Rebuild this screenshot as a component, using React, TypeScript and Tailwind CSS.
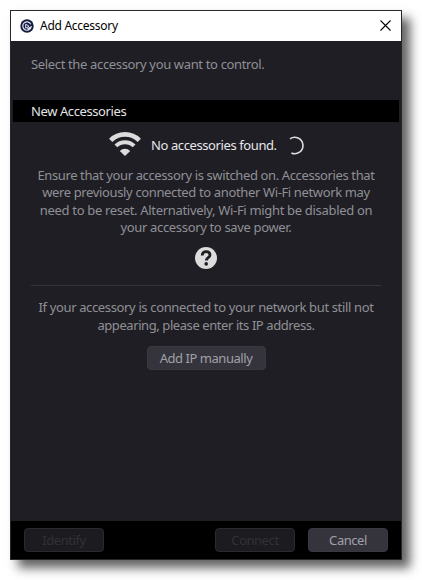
import React from 'react';
import { clsx } from 'clsx';

const hintLines = [
  { text: 'Ensure that your accessory is switched on. Accessories that', className: 'tracking-[-0.38px]' },
  { text: 'were previously connected to another Wi-Fi network may', className: 'tracking-[-0.36px]' },
  { text: 'need to be reset. Alternatively, Wi-Fi might be disabled on', className: 'tracking-[-0.32px]' },
  { text: 'your accessory to save power.', className: 'tracking-[-0.34px]' },
];

const manualLines = [
  { text: 'If your accessory is connected to your network but still not', className: 'tracking-[-0.36px]' },
  { text: 'appearing, please enter its IP address.', className: 'tracking-[-0.42px]' },
];

const AppLogo = () => (
  <svg className="h-[14px] w-[14px]" viewBox="0 0 14 14" fill="none">
    <circle cx="7" cy="7" r="6.7" fill="#14193f" />
    <path d="M10.8 5.2A4.2 4.2 0 1 0 11.1 8L7.4 9.9" stroke="#dfe3ec" strokeWidth="1.2" />
    <path d="M8.9 7.1L5.7 5.2v4l3.4-1.9" stroke="#dfe3ec" strokeWidth="1" />
  </svg>
);

const WifiIcon = () => (
  <svg className="h-6 w-8" viewBox="0 0 32 24" fill="none" stroke="#dcdcdc">
    <path d="M1.7 8.3a20.2 20.2 0 0 1 28.6 0" strokeWidth="4.6" />
    <path d="M6.9 13.9a12.9 12.9 0 0 1 18.2 0" strokeWidth="4" />
    <path d="M10.8 19a7.4 7.4 0 0 1 10.4 0L16 24z" fill="#dcdcdc" stroke="none" />
  </svg>
);

const Spinner = () => (
  <svg className="h-[19px] w-[18px]" viewBox="0 0 18 19" fill="none">
    <path d="M3 2.8A8.2 8.2 0 1 1 4.4 17" stroke="#dcdcdc" strokeWidth="1.6" />
  </svg>
);

const HelpIcon = () => (
  <svg className="h-[22px] w-[22px]" viewBox="0 0 22 22" fill="none">
    <circle cx="11" cy="11" r="11" fill="#dcdcdc" />
    <path d="M7.2 8.4C7.2 6 8.9 4.7 11.1 4.7c2.3 0 3.9 1.3 3.9 3.3 0 2.7-3.7 2.7-3.7 5.6" stroke="#1f1e24" strokeWidth="2.8" />
    <circle cx="11.2" cy="16.9" r="1.8" fill="#1f1e24" />
  </svg>
);

type Line = { text: string; className: string };

const Paragraph: React.FC<{ lines: Line[] }> = ({ lines }) => (
  <p className="text-center leading-[17.33px] whitespace-nowrap text-[#8f9096]">
    {lines.map((line) => (
      <span key={line.text} className={clsx('block', line.className)}>{line.text}</span>
    ))}
  </p>
);

const Button: React.FC<{ className?: string; disabled?: boolean; children: React.ReactNode }> = ({ className, disabled, children }) => (
  <button
    disabled={disabled}
    className={clsx(
      'flex h-6 items-center justify-center rounded-[4px] border pt-[2px] tracking-[-0.45px] whitespace-nowrap',
      disabled ? 'border-[#2b2b2d] bg-[#1c1b20] text-[#323235]' : 'border-[#3a3940] bg-[#35343d] text-[#a0a1a8]',
      className
    )}
  >
    {children}
  </button>
);

export default function App() {
  return (
    <div className="h-[580px] w-[422px] overflow-hidden bg-white p-[10px] font-['Noto_Sans',sans-serif] text-[13px] tracking-[-0.4px]">
      <div className="flex h-[550px] w-[392px] flex-col border border-[#28272c] bg-[#1f1e24] shadow-[8px_8px_10px_rgba(0,0,0,0.62)]">
        <header className="flex h-[30px] shrink-0 items-center bg-white pr-[10px] pl-[9px]">
          <AppLogo />
          <span className="ml-[6px] text-[12px] tracking-[-0.27px] text-black">Add Accessory</span>
          <button className="ml-auto -mt-[2px]" aria-label="Close">
            <svg className="h-[11px] w-[11px]" viewBox="0 0 11 11" fill="none">
              <path d="M.5.5l10 10M10.5.5l-10 10" stroke="#000" strokeWidth="1.1" />
            </svg>
          </button>
        </header>

        <main className="flex flex-1 flex-col px-[2px]">
          <p className="mt-[14px] px-[18px] leading-[18px] tracking-[-0.35px] text-[#8f9096]">Select the accessory you want to control.</p>
          <h2 className="mt-[27px] flex h-[22px] items-center bg-black px-[18px] pt-[2px] text-[#e4e4e6]">New Accessories</h2>

          <div className="mt-[9px] flex h-[26px] items-center pl-[96px] text-[#e6e6e8]">
            <WifiIcon />
            <span className="ml-[10px] pt-[3px] whitespace-nowrap">No accessories found.</span>
            <span className="ml-auto pt-[2px] pr-[94px]"><Spinner /></span>
          </div>

          <div className="mt-[10px]">
            <Paragraph lines={hintLines} />
          </div>
          <div className="mt-[11px] flex justify-center">
            <HelpIcon />
          </div>
          <hr className="mx-[18px] mt-4 border-[#35343c]" />
          <div className="mt-[13px]">
            <Paragraph lines={manualLines} />
          </div>
          <div className="mt-3 flex justify-center">
            <Button className="w-[119px]">Add IP manually</Button>
          </div>
        </main>

        <footer className="flex h-[38px] shrink-0 items-center bg-black px-[13px]">
          <Button className="w-20" disabled>Identify</Button>
          <Button className="ml-auto w-20" disabled>Connect</Button>
          <Button className="ml-[13px] w-20">Cancel</Button>
        </footer>
      </div>
    </div>
  );
}
